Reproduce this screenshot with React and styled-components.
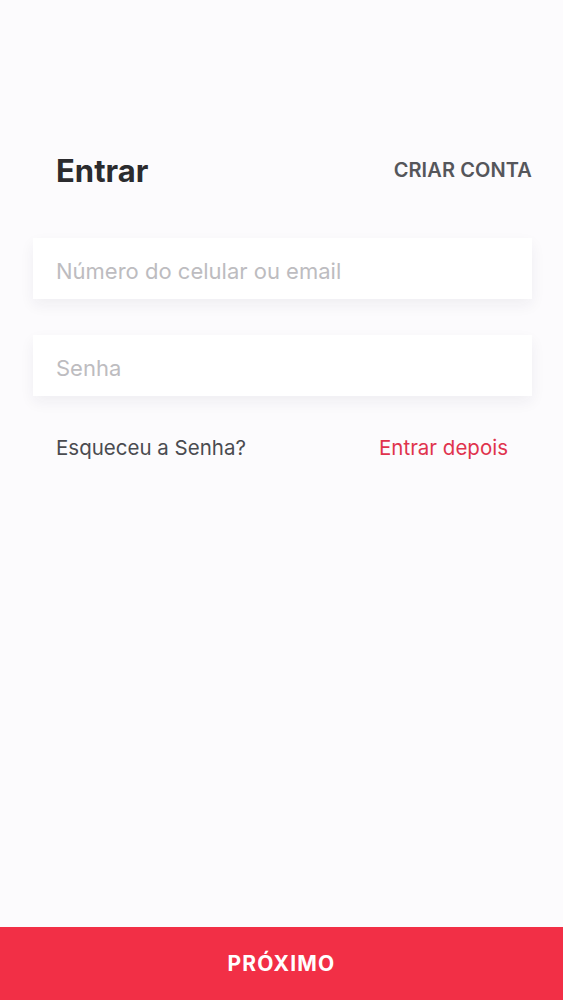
import React from "react";
import styled, { createGlobalStyle } from "styled-components";

const GlobalStyle = createGlobalStyle`
  html, body {
    margin: 0;
    padding: 0;
    background: #fcfbfd;
  }
  * {
    box-sizing: border-box;
  }
`;

const Screen = styled.div`
  width: 563px;
  height: 1000px;
  display: flex;
  flex-direction: column;
  background: #fcfbfd;
  font-family: Inter, "Noto Sans", sans-serif;
`;

const Content = styled.div`
  flex: 1;
  padding: 150px 31px 0 33px;
  display: flex;
  flex-direction: column;
`;

const Header = styled.div`
  display: flex;
  align-items: center;
  justify-content: space-between;
  padding-left: 23px;
  height: 40px;
  margin-bottom: 48px;
`;

const Title = styled.h1`
  margin: 0;
  font-size: 31px;
  font-weight: 700;
  color: #2b2b2e;
  letter-spacing: 0;
`;

const CreateLink = styled.a`
  font-size: 20px;
  font-weight: 600;
  color: #55565b;
  letter-spacing: 0.1px;
  cursor: pointer;
`;

const Field = styled.input`
  width: 100%;
  height: 61px;
  border: none;
  outline: none;
  background: #ffffff;
  padding: 4px 23px 0;
  font-family: inherit;
  font-size: 22px;
  color: #333;
  box-shadow: 0 6px 14px rgba(40, 40, 60, 0.06);
  margin-bottom: ${({ $gap }) => $gap || 0}px;

  &::placeholder {
    color: #bdbcc0;
  }
`;

const LinkRow = styled.div`
  display: flex;
  justify-content: space-between;
  align-items: center;
  padding: 0 24px 0 23px;
  margin-top: 39px;
`;

const TextLink = styled.a`
  font-size: 20.5px;
  color: ${({ $accent }) => ($accent ? "#e0334d" : "#4a4b50")};
  cursor: pointer;
`;

const NextButton = styled.button`
  width: 100%;
  height: 73px;
  border: none;
  background: #f22f46;
  color: #ffffff;
  font-family: inherit;
  font-size: 21px;
  font-weight: 700;
  letter-spacing: 1.2px;
  padding-top: 0;
  cursor: pointer;
`;

export default function App() {
  return (
    <>
      <GlobalStyle />
      <Screen>
        <Content>
          <Header>
            <Title>Entrar</Title>
            <CreateLink>CRIAR CONTA</CreateLink>
          </Header>
          <Field placeholder="Número do celular ou email" $gap={36} />
          <Field type="password" placeholder="Senha" />
          <LinkRow>
            <TextLink>Esqueceu a Senha?</TextLink>
            <TextLink $accent>Entrar depois</TextLink>
          </LinkRow>
        </Content>
        <NextButton>PRÓXIMO</NextButton>
      </Screen>
    </>
  );
}
